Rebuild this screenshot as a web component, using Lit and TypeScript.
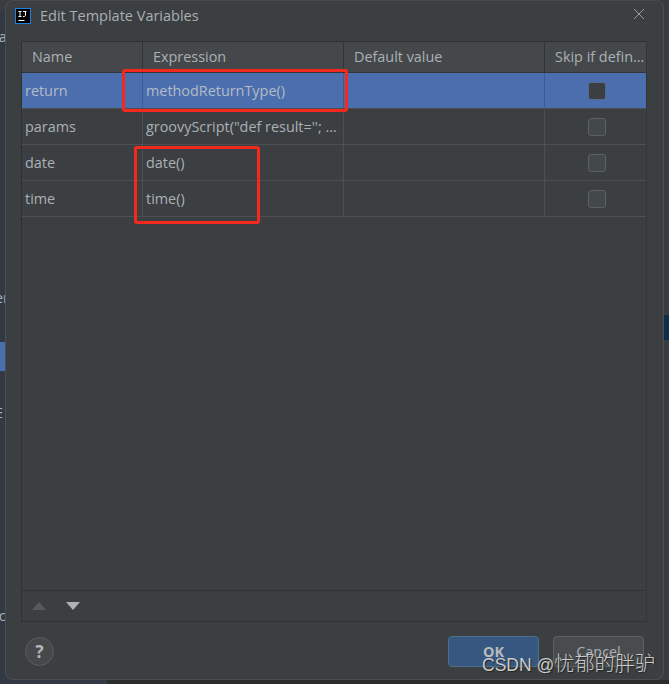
import { LitElement, html, css, svg } from "lit";
import { customElement } from "lit/decorators.js";

const rows = [
  { name: "return", expr: "methodReturnType()", selected: true },
  { name: "params", expr: 'groovyScript("def result=\'\'; ...', selected: false },
  { name: "date", expr: "date()", selected: false },
  { name: "time", expr: "time()", selected: false },
];

@customElement("app-root")
export class AppRoot extends LitElement {
  static styles = css`
    :host {
      display: block;
      position: relative;
      width: 669px;
      height: 684px;
      overflow: hidden;
      background: #333944;
      font-family: "Open Sans", "Noto Sans", sans-serif;
      font-size: 14.4px;
      color: #a9b1b6;
    }
    .bd { position: absolute; }
    .bd-top { left: 0; top: 0; width: 669px; height: 11px; background: #3a3d3f; }
    .bd-right { left: 660px; top: 0; width: 9px; height: 684px; background: #3a3d3f; }
    .bd-bottom { left: 107px; top: 680px; width: 562px; height: 4px; background: #2b2b2b; }
    .bd-sel { left: 0; top: 342px; width: 6px; height: 29px; background: #4b6eaf; }
    .bd-stripe { left: 664px; top: 315px; width: 5px; height: 25px; background: #0e2d4b; }
    .bd-text { left: -5px; color: #a9b1b6; white-space: nowrap; }
    .dialog {
      position: relative;
      box-sizing: border-box;
      margin-left: 5px;
      width: 659px;
      height: 680px;
      display: flex;
      flex-direction: column;
      background: #3c3f41;
      border: 1px solid #4c4f51;
      border-top-color: #47494b;
      border-radius: 8px;
    }
    .title {
      height: 40px;
      flex: none;
      display: flex;
      align-items: flex-start;
      padding: 7px 18px 0 9px;
      box-sizing: border-box;
    }
    .logo { width: 16px; height: 16px; flex: none; }
    .title-text { margin: -1px 0 0 9px; font-size: 14.5px; line-height: 17px; flex: 1; color: #a8afb4; }
    .close { width: 12px; height: 12px; flex: none; }
    .table {
      flex: 1;
      margin: 0 16px 0 15px;
      border: 1px solid #2f3234;
      border-right-color: #333638;
      display: flex;
      flex-direction: column;
      min-height: 0;
    }
    .row {
      display: grid;
      grid-template-columns: 121px 201px 201px 101px;
      flex: none;
    }
    .head {
      height: 31px;
      background: #45484a;
      border-bottom: 1px solid #323436;
      box-sizing: border-box;
    }
    .hc {
      padding-left: 10px;
      line-height: 30px;
      border-right: 1px solid #323436;
      white-space: nowrap;
      overflow: hidden;
      color: #a9b1b6;
      box-sizing: border-box;
    }
    .hc:last-child { border-right: none; }
    .body-row { height: 36px; box-sizing: border-box; border-bottom: 1px solid #4d4f51; }
    .body-row.sel { background: #4b6eaf; color: #b3bcc4; }
    .c {
      box-sizing: border-box;
      padding-left: 3px;
      line-height: 36px;
      border-right: 1px solid #4d4f51;
      white-space: nowrap;
      overflow: hidden;
    }
    .c:last-child { border-right: none; }
    .sel .c { border-right-color: #3f5a8c; }
    .cb { display: flex; align-items: center; justify-content: center; padding-left: 2px; }
    .box {
      width: 18px;
      height: 18px;
      box-sizing: border-box;
      border: 1px solid #5e6163;
      border-radius: 3px;
      background: #43494a;
    }
    .sel .box { background: #3c3f41; border-color: #566a8f; }
    .spacer { flex: 1; }
    .toolbar {
      flex: none;
      height: 31px;
      box-sizing: border-box;
      border-top: 1px solid #323232;
      display: flex;
      align-items: center;
      gap: 20px;
      padding: 0 0 0 10px;
    }
    .toolbar svg { width: 14px; height: 8px; display: block; }
    .footer {
      flex: none;
      height: 57px;
      display: flex;
      align-items: flex-start;
      padding: 14px 19px 0 19px;
      box-sizing: border-box;
    }
    .help {
      width: 29px;
      height: 29px;
      margin-top: 1px;
      box-sizing: border-box;
      border-radius: 50%;
      background: #46494b;
      border: 1px solid #5a5d5f;
      display: flex;
      align-items: center;
      justify-content: center;
      font-size: 17px;
      font-weight: 700;
      color: #b4b7b9;
    }
    .btns { margin-left: auto; display: flex; gap: 14px; }
    .btn {
      width: 91px;
      height: 31px;
      box-sizing: border-box;
      border-radius: 4px;
      text-align: center;
      line-height: 29px;
      border: 1px solid #5e6163;
      background: #494c4e;
      color: #a9b1b6;
    }
    .btn.ok {
      background: #365880;
      border-color: #4c708c;
      color: #bbbbbb;
      font-weight: 700;
    }
    .ann { position: absolute; box-sizing: border-box; border: 3px solid #f5281e; border-radius: 3px; }
    .a1 { left: 122px; top: 69px; width: 226px; height: 43px; }
    .a2 { left: 134px; top: 146px; width: 126px; height: 78px; }
    .wm {
      position: absolute;
      left: 482px;
      top: 652px;
      font-family: "Liberation Sans", "Noto Sans CJK SC", sans-serif;
      font-size: 17.5px;
      line-height: 24px;
      white-space: nowrap;
      color: #c9cbcc;
      text-shadow: 1px 1px 1px #222;
    }
    .wm span { font-size: 20.2px; font-weight: 300; }
  `;

  private logo() {
    return svg`<svg class="logo" viewBox="0 0 16 16">
      <rect x="0.5" y="0.5" width="15" height="15" fill="#000" stroke="#1e7fe0"/>
      <path d="M3.5 3.5h3M5 3.5v5M3.5 8.5h3M8 3.5h3.5M10.5 3.5v3.8c0 1-.8 1.2-2.5 1.2" fill="none" stroke="#fff" stroke-width="1"/>
      <rect x="3.5" y="12" width="6" height="1" fill="#fff"/>
    </svg>`;
  }

  render() {
    return html`
      <div class="bd bd-top"></div>
      <div class="bd bd-right"></div>
      <div class="bd bd-bottom"></div>
      <div class="bd bd-sel"></div>
      <div class="bd bd-stripe"></div>
      <div class="bd bd-text" style="top:27px">ja</div>
      <div class="bd bd-text" style="top:288px">er</div>
      <div class="bd bd-text" style="top:403px">E</div>
      <div class="bd bd-text" style="top:606px">ic</div>
      <div class="dialog">
        <div class="title">
          ${this.logo()}
          <div class="title-text">Edit Template Variables</div>
          <svg class="close" viewBox="0 0 12 12"><path d="M1 1l10 10M11 1L1 11" stroke="#9a9d9f" stroke-width="1" fill="none"/></svg>
        </div>
        <div class="table">
          <div class="row head">
            <div class="hc">Name</div>
            <div class="hc">Expression</div>
            <div class="hc">Default value</div>
            <div class="hc">Skip if defin...</div>
          </div>
          ${rows.map(
            (r) => html`<div class="row body-row ${r.selected ? "sel" : ""}">
              <div class="c">${r.name}</div>
              <div class="c">${r.expr}</div>
              <div class="c"></div>
              <div class="c cb"><div class="box"></div></div>
            </div>`
          )}
          <div class="spacer"></div>
          <div class="toolbar">
            <svg viewBox="0 0 14 8"><path d="M0 8L7 0l7 8z" fill="#585a5c"/></svg>
            <svg viewBox="0 0 14 8"><path d="M0 0h14L7 8z" fill="#afb1b3"/></svg>
          </div>
        </div>
        <div class="footer">
          <div class="help">?</div>
          <div class="btns">
            <div class="btn ok">OK</div>
            <div class="btn">Cancel</div>
          </div>
        </div>
      </div>
      <div class="ann a1"></div>
      <div class="ann a2"></div>
      <div class="wm">CSDN @<span>忧郁的胖驴</span></div>
    `;
  }
}
